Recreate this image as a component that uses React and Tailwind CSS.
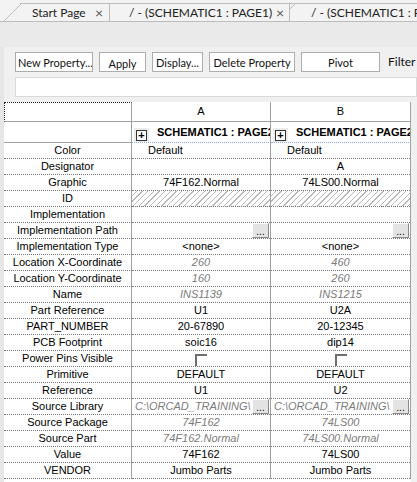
import React from 'react'

const rows = [
    { label: 'Color', a: 'Default', b: 'Default', left: true },
    { label: 'Designator', a: '', b: 'A' },
    { label: 'Graphic', a: '74F162.Normal', b: '74LS00.Normal' },
    { label: 'ID', hatch: true },
    { label: 'Implementation', a: '', b: '' },
    { label: 'Implementation Path', a: '', b: '', browse: true },
    { label: 'Implementation Type', a: '<none>', b: '<none>' },
    { label: 'Location X-Coordinate', a: '260', b: '460', dim: true },
    { label: 'Location Y-Coordinate', a: '160', b: '260', dim: true },
    { label: 'Name', a: 'INS1139', b: 'INS1215', dim: true },
    { label: 'Part Reference', a: 'U1', b: 'U2A' },
    { label: 'PART_NUMBER', a: '20-67890', b: '20-12345' },
    { label: 'PCB Footprint', a: 'soic16', b: 'dip14' },
    { label: 'Power Pins Visible', check: true },
    { label: 'Primitive', a: 'DEFAULT', b: 'DEFAULT' },
    { label: 'Reference', a: 'U1', b: 'U2' },
    { label: 'Source Library', a: 'C:\\ORCAD_TRAINING\\', b: 'C:\\ORCAD_TRAINING\\', dim: true, browse: true, left: true },
    { label: 'Source Package', a: '74F162', b: '74LS00', dim: true },
    { label: 'Source Part', a: '74F162.Normal', b: '74LS00.Normal', dim: true },
    { label: 'Value', a: '74F162', b: '74LS00' },
    { label: 'VENDOR', a: 'Jumbo Parts', b: 'Jumbo Parts' },
]

const BrowseBtn = () => (
    <div className="shrink-0 w-[17px] h-[15px] mr-px bg-[#e3e3e3] border border-t-white border-l-white border-r-[#8a8a8a] border-b-[#8a8a8a] flex items-end justify-center text-[10px] leading-[10px] text-black">
        ...
    </div>
)

const ValueCell = ({ row, value }) => {
    if (row.hatch) {
        return (
            <div className="h-[16px] border-b border-dotted border-[#777] bg-[repeating-linear-gradient(135deg,#ffffff_0px,#ffffff_3px,#b8b8b8_3px,#b8b8b8_4px)]" />
        )
    }
    if (row.check) {
        return (
            <div className="h-[16px] border-b border-dotted border-[#777] flex justify-center">
                <div className="mt-[3px] w-[12px] h-[12px] border-t-2 border-l-2 border-[#6e6e6e] bg-white" />
            </div>
        )
    }
    return (
        <div className={`h-[16px] border-b border-dotted border-[#777] flex items-center ${row.left ? 'justify-start' : 'justify-center'}`}>
            <span className={`flex-1 min-w-0 whitespace-nowrap overflow-hidden ${row.left ? (row.browse ? 'pl-[3px]' : 'pl-[16px]') : 'text-center'} ${row.dim ? 'italic text-[#7b7b7b]' : 'text-black'}`}>
                {value}
            </span>
            {row.browse && <BrowseBtn />}
        </div>
    )
}

export default function App() {
    return (
        <div className="w-[417px] h-[482px] overflow-hidden bg-[#f0f0f0] flex flex-col font-['Lato',sans-serif] text-[12px]">
            {/* tabs */}
            <div className="h-[22px] shrink-0 flex items-end border-b border-[#bcbcbc] bg-[#f3f3f3] relative whitespace-nowrap">
                <svg className="absolute left-[3px] top-[3px]" width="19" height="19" viewBox="0 0 19 19">
                    <line x1="0" y1="19" x2="18" y2="1" stroke="#bcbcbc" strokeWidth="1" />
                </svg>
                <div className="ml-[20px] w-[90px] shrink-0 h-[18px] border-t border-r border-[#bcbcbc] flex items-center text-[#222]">
                    <span className="ml-[12px] leading-none">Start Page</span>
                    <span className="ml-auto mr-[6px] text-[#555] text-[14px] leading-none">×</span>
                </div>
                <div className="w-[180px] shrink-0 h-[18px] border-t border-r border-[#bcbcbc] flex items-center text-[#222]">
                    <span className="ml-[19px] leading-none">/ - (SCHEMATIC1 : PAGE1)</span>
                    <span className="ml-auto mr-[5px] text-[#555] text-[14px] leading-none">×</span>
                </div>
                <div className="relative flex-1 min-w-0 h-[18px] border-t border-[#bcbcbc] flex items-center text-[#222] overflow-hidden">
                    <svg className="absolute left-0 top-[-1px]" width="6" height="6" viewBox="0 0 6 6">
                        <line x1="0" y1="6" x2="6" y2="0" stroke="#bcbcbc" strokeWidth="1" />
                    </svg>
                    <span className="ml-[21px] leading-none">/ - (SCHEMATIC1 : PAGE2)</span>
                </div>
            </div>

            <div className="h-[25px] shrink-0 bg-[#eaeaea]" />

            <div className="flex-1 flex min-h-0">
                <div className="w-[4px] shrink-0 bg-[#e6e6e6]" />
                <div className="flex-1 min-w-0 flex flex-col bg-[#f0f0f0]">
                    {/* toolbar */}
                    <div className="flex items-center h-[20px] mt-[5px] ml-[11px] gap-[6px] text-[#111] text-[11px] whitespace-nowrap overflow-hidden">
                        <button className="h-[20px] w-[78px] shrink-0 border border-[#adadad] bg-white px-[2px] text-left leading-none overflow-hidden">New Property...</button>
                        <button className="h-[20px] w-[47px] shrink-0 border border-[#adadad] bg-white leading-none pt-[2px]">Apply</button>
                        <button className="h-[20px] w-[51px] shrink-0 border border-[#adadad] bg-white leading-none overflow-hidden">Display...</button>
                        <button className="h-[20px] w-[86px] shrink-0 border border-[#adadad] bg-white leading-none">Delete Property</button>
                        <button className="h-[20px] w-[79px] shrink-0 border border-[#adadad] bg-white leading-none">Pivot</button>
                        <span className="ml-[2px] text-[12px]">Filter by:</span>
                    </div>
                    <div className="h-[20px] mt-[5px] ml-[11px] shrink-0 border border-[#d9d9d9] bg-white" />

                    {/* grid */}
                    <div className="mt-[5px] flex-1 min-h-0 flex font-['Liberation_Sans',Arial,sans-serif] text-[11px]">
                        <div className="w-[407px] shrink-0 bg-white">
                            <div className="grid grid-cols-[128px_139px_140px]">
                                <div className="h-[20px] border-t border-l border-dotted border-[#222] border-r border-r-[#a0a0a0] border-b border-b-[#a0a0a0]" style={{ borderRightStyle: 'solid', borderBottomStyle: 'solid' }} />
                                <div className="h-[20px] border-r border-b border-[#a0a0a0] flex items-center justify-center text-black">A</div>
                                <div className="h-[20px] border-r border-b border-[#a0a0a0] flex items-center justify-center text-black">B</div>

                                <div className="h-[21px] border-r border-b border-[#a0a0a0]" />
                                {[0, 1].map(i => (
                                    <div key={i} className="h-[21px] border-r border-[#a0a0a0] border-b border-b-[#8fa9d6] border-dotted flex items-center overflow-hidden" style={{ borderRightStyle: 'solid' }}>
                                        <div className="ml-[2px] mt-[6px] w-[15px] h-[15px] bg-[#ececec] flex items-center justify-center shrink-0">
                                            <div className="w-[11px] h-[11px] border border-[#333] bg-white flex items-center justify-center text-[11px] leading-none font-bold text-black">+</div>
                                        </div>
                                        <span className="ml-[8px] font-bold whitespace-nowrap text-black">SCHEMATIC1 : PAGE2</span>
                                    </div>
                                ))}

                                {rows.map(row => (
                                    <React.Fragment key={row.label}>
                                        <div className="h-[16px] border-b border-dotted border-b-[#777] border-r border-r-[#a0a0a0] flex items-center justify-center text-black whitespace-nowrap" style={{ borderRightStyle: 'solid' }}>
                                            {row.label}
                                        </div>
                                        <div className="border-r border-[#a0a0a0] min-w-0">
                                            <ValueCell row={row} value={row.a} />
                                        </div>
                                        <div className="border-r border-[#a0a0a0] min-w-0">
                                            <ValueCell row={row} value={row.b} />
                                        </div>
                                    </React.Fragment>
                                ))}
                            </div>
                        </div>
                        <div className="flex-1 bg-[#f0f0f0]" />
                    </div>
                </div>
            </div>
        </div>
    )
}
